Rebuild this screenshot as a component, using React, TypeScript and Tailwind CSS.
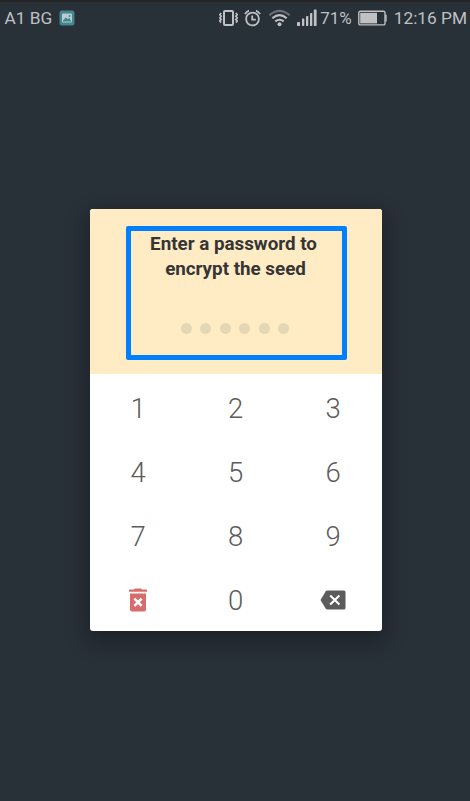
import React from "react";

function StatusBar() {
  return (
    <header className="flex h-[34px] items-center border-t-2 border-[#252525] pl-[4.5px] pr-[1px] text-[17.3px] leading-8 text-[#bfc1c4]">
      <span className="w-[54.5px] whitespace-nowrap">A1 BG</span>
      <svg className="h-4 w-4" viewBox="0 0 16 16">
        <rect x=".5" y=".5" width="15" height="15" rx="2.5" fill="#43868f" />
        <rect x="3" y="3.5" width="10" height="9" rx="1" fill="#b9cdcf" />
        <path d="M4 10.5 6.8 7.5l2 1.5 1.5-1 2.2 3.5H4z" fill="#43868f" />
        <circle cx="10.5" cy="6" r="1" fill="#43868f" />
      </svg>
      <div className="ml-auto flex items-center">
        <svg className="h-5 w-[19px]" viewBox="0 0 19 20" fill="none" stroke="#bfc1c4">
          <rect x="5" y="2.9" width="9" height="14.2" rx="1" strokeWidth="2" />
          <path d="m2.2 5-1.4 1.6 1.4 1.6-1.4 1.6 1.4 1.6-1.4 1.6 1.4 1.6M16.8 5l1.4 1.6-1.4 1.6 1.4 1.6-1.4 1.6 1.4 1.6-1.4 1.6" strokeWidth="1.7" />
        </svg>
        <svg className="ml-[6px] h-5 w-[17px]" viewBox="0 0 17 20" fill="none" stroke="#bfc1c4" strokeWidth="1.8">
          <circle cx="8.5" cy="11" r="6.4" />
          <path d="M8.2 7.4v4.2h3.6M1 6.2Q2.2 3.7 5 2.6M16 6.2Q14.8 3.7 12 2.6" />
        </svg>
        <svg className="ml-[7px] h-5 w-[23px]" viewBox="0 0 23 20" fill="none" stroke="#bfc1c4" strokeWidth="2.1">
          <path d="M1.3 7.2q10.2-8.8 20.4 0" stroke="#6a7075" />
          <path d="M4.3 10.2q7.2-6 14.4 0M7.3 13.4q4.2-3.3 8.4 0" />
          <circle cx="11.5" cy="16.3" r="2" fill="#bfc1c4" stroke="none" />
        </svg>
        <svg className="ml-[5px] h-5 w-[21px]" viewBox="0 0 21 20" fill="#bfc1c4">
          <rect x="1" y="14" width="3" height="4" rx=".4" />
          <rect x="6" y="10.5" width="2.3" height="7.5" rx=".4" />
          <rect x="10" y="8" width="2.3" height="10" rx=".4" />
          <rect x="14" y="5" width="2.3" height="13" rx=".4" />
          <rect x="17.8" y="1.5" width="2.8" height="16.5" rx=".4" />
        </svg>
        <span className="ml-[3.5px] w-[37.5px] whitespace-nowrap text-[17px]">71%</span>
        <svg className="h-5 w-[29px]" viewBox="0 0 29 20">
          <rect x=".8" y="3.3" width="26.2" height="13.6" rx="1.5" fill="none" stroke="#bfc1c4" strokeWidth="1.4" />
          <rect x="2.2" y="4.8" width="16.8" height="10.6" fill="#bfc1c4" />
          <path d="M28 6.7v6.8" stroke="#bfc1c4" strokeWidth="1.4" />
        </svg>
        <span className="ml-[7px] w-[75.3px] whitespace-nowrap">12:16 PM</span>
      </div>
    </header>
  );
}

function TrashIcon() {
  return (
    <svg className="mb-px h-6 w-[18px]" viewBox="0 0 18 24">
      <path d="M0 2.2q0-.8.8-.8H5L6 .4h6l1 1h4.2q.8 0 .8.8v1.5H0zM1 5.6h16v16q0 2-2 2H3q-2 0-2-2z" fill="#d86c6c" />
      <path d="m5.4 10.7 7.2 7.2M12.6 10.7l-7.2 7.2" stroke="#fff" strokeWidth="2.6" />
    </svg>
  );
}

function BackspaceIcon() {
  return (
    <svg className="mb-px h-5 w-[26px]" viewBox="0 0 26 20">
      <path d="M7.4.5H24q1.5 0 1.5 1.5v16q0 1.5-1.5 1.5H7.4q-1 0-1.6-.8L.5 10l5.3-8.7Q6.4.5 7.4.5z" fill="#5c5c5c" />
      <path d="m10.2 5.4 9.2 9.2M19.4 5.4l-9.2 9.2" stroke="#fff" strokeWidth="2.1" />
    </svg>
  );
}

const keys = ["1", "2", "3", "4", "5", "6", "7", "8", "9", "clear", "0", "delete"];

function Key({ name }: { name: string }) {
  return (
    <button
      aria-label={name}
      className="flex items-center justify-center text-[27.5px] font-light leading-none text-[#5c5c5c]"
    >
      {name === "clear" ? (
        <TrashIcon />
      ) : name === "delete" ? (
        <BackspaceIcon />
      ) : (
        <span className="pt-[2px]">{name}</span>
      )}
    </button>
  );
}

export default function App() {
  return (
    <main className="h-[801px] w-[470px] overflow-hidden bg-[#283038] font-['Roboto',sans-serif]">
      <StatusBar />
      <section className="ml-[89.5px] mt-[174.5px] flex h-[422.5px] w-[292.5px] flex-col overflow-hidden rounded-[3px] bg-white shadow-[0_8px_22px_3px_rgba(0,0,0,0.3)]">
        <div className="h-[165.5px] shrink-0 bg-[#ffecc5] pl-[36.5px] pt-[17.5px]">
          <div className="flex h-[134px] w-[221px] flex-col items-center rounded-[2px] border-5 border-[#0080ff]">
            <h1 className="whitespace-nowrap pt-[1px] text-center text-[18.8px] font-bold leading-[25px] text-[#353535]">
              <span className="block pr-[6px]">Enter a password to</span>
              <span className="block pr-[2px]">encrypt the seed</span>
            </h1>
            <div className="mt-[41px] flex gap-[8.5px] pr-[2.6px]">
              {[0, 1, 2, 3, 4, 5].map((i) => (
                <i key={i} className="h-[11px] w-[11px] rounded-full bg-[#e5d7b4]" />
              ))}
            </div>
          </div>
        </div>
        <div className="grid shrink-0 grid-cols-3 auto-rows-[64px] pt-[2px]">
          {keys.map((k) => (
            <Key key={k} name={k} />
          ))}
        </div>
      </section>
    </main>
  );
}
